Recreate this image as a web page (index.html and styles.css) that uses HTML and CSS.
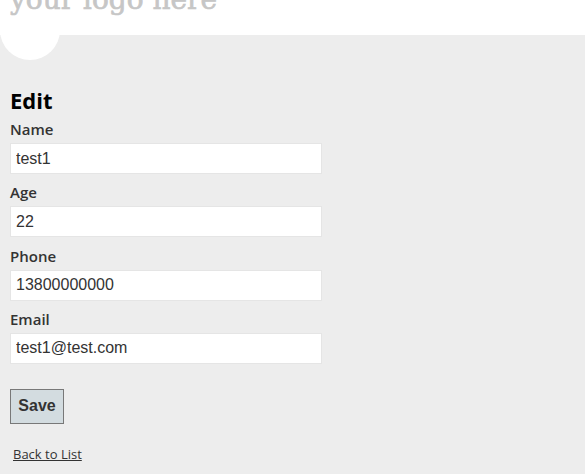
FILE: index.html
```html
<!DOCTYPE html>
<html>
<head>
<meta charset="utf-8">
<link rel="stylesheet" href="styles.css">
</head>
<body>
<header class="header">
  <div class="logo">your logo here</div>
</header>
<div class="corner"></div>
<main class="main">
  <h2 class="title">Edit</h2>
  <form class="form">
    <div class="field">
      <label class="label">Name</label>
      <input class="input" type="text" value="test1">
    </div>
    <div class="field">
      <label class="label">Age</label>
      <input class="input" type="text" value="22">
    </div>
    <div class="field">
      <label class="label">Phone</label>
      <input class="input" type="text" value="13800000000">
    </div>
    <div class="field">
      <label class="label">Email</label>
      <input class="input" type="text" value="test1@test.com">
    </div>
    <div class="actions">
      <button class="save" type="button">Save</button>
    </div>
  </form>
  <div class="back"><a href="#" class="back-link">Back to List</a></div>
</main>
</body>
</html>
```
FILE: styles.css
```css
html, body {
  margin: 0;
  padding: 0;
}
body {
  background: #ededed;
  font-family: "Open Sans", "Noto Sans", sans-serif;
  color: #333;
  position: relative;
}
.header {
  background: #fff;
  height: 35px;
  overflow: hidden;
  position: relative;
  z-index: 1;
}
.logo {
  font-family: "DejaVu Serif", serif;
  font-weight: normal;
  font-size: 28px;
  color: #c6c6c6;
  line-height: 28px;
  margin-top: -14px;
  padding-left: 10px;
  -webkit-text-stroke: 0.7px #c6c6c6;
}
.corner {
  position: absolute;
  left: 0;
  top: 0;
  width: 60px;
  height: 60px;
  border-radius: 50%;
  background: #fff;
  z-index: 0;
}
.main {
  position: relative;
  z-index: 1;
  padding: 53px 10px 0 10px;
}
.title {
  margin: 0 0 7px 0;
  font-size: 22px;
  font-weight: bold;
  color: #000;
  line-height: 24px;
}
.form {
  display: flex;
  flex-direction: column;
}
.field {
  display: flex;
  flex-direction: column;
  align-items: flex-start;
}
.label {
  font-size: 15px;
  font-weight: 600;
  line-height: 20px;
  margin-bottom: 4px;
  color: #333;
}
.input {
  box-sizing: border-box;
  width: 312px;
  height: 31px;
  border: 1px solid #e5e5e5;
  background: #fff;
  font-family: "Liberation Sans", Arial, sans-serif;
  font-size: 16px;
  color: #333;
  padding: 0 5px;
  margin: 0 0 8.33px 0;
}
.actions {
  padding-top: 16.67px;
}
.save {
  box-sizing: border-box;
  width: 54px;
  height: 35px;
  background: #d3dce0;
  border: 1px solid #787878;
  font-family: "Liberation Sans", Arial, sans-serif;
  font-weight: bold;
  font-size: 16px;
  color: #333;
  padding: 0;
}
.back {
  padding: 20px 0 0 3px;
  line-height: 18px;
}
.back-link {
  font-size: 13px;
  color: #333;
}
```
